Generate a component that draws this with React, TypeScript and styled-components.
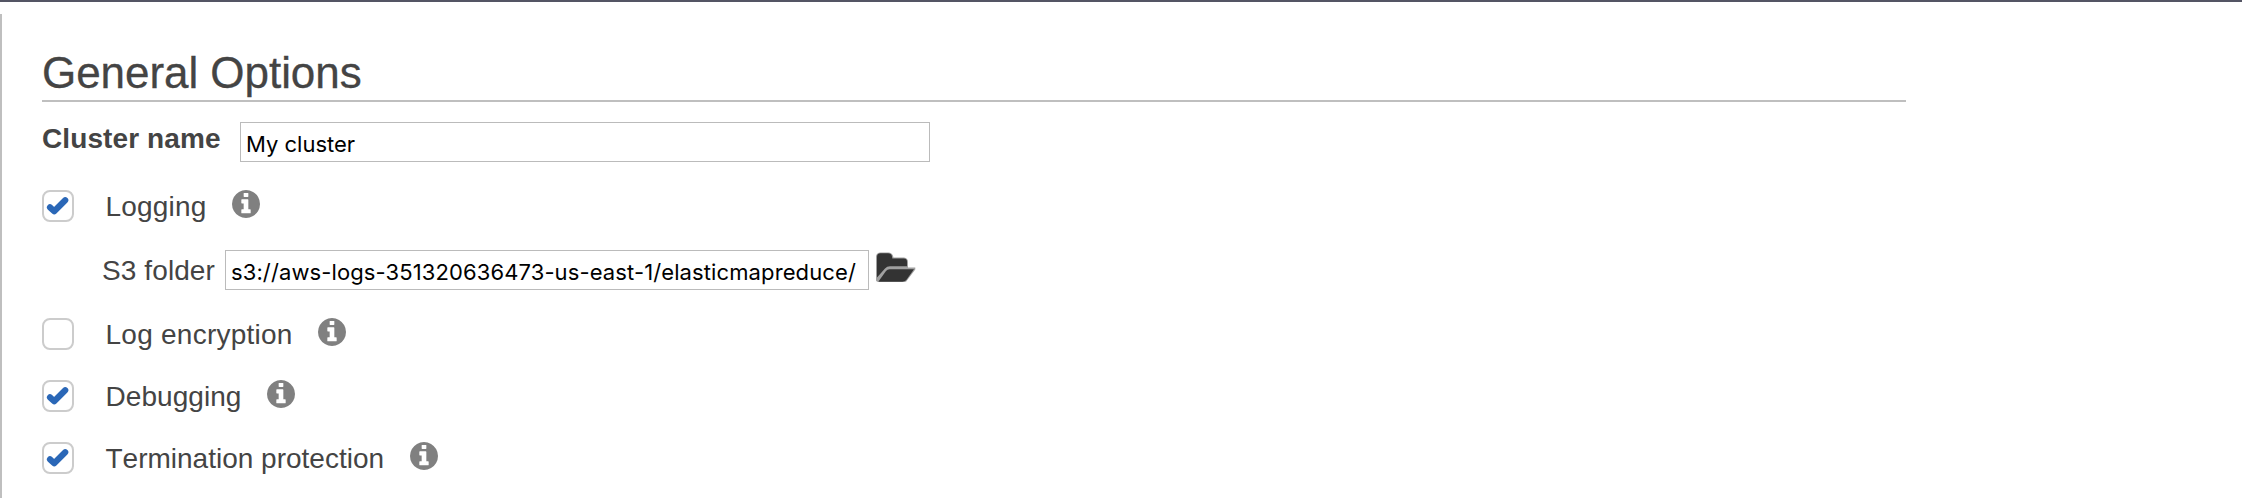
import React from "react";
import styled, { createGlobalStyle } from "styled-components";

const GlobalStyle = createGlobalStyle`
  *, *::before, *::after { box-sizing: border-box; }
  body { margin: 0; background: #fff; }
`;

const Page = styled.div`
  height: 498px;
  overflow: hidden;
  border-top: 2px solid #545564;
  padding-top: 12px;
  background: #fff;
  font-family: "Liberation Sans", Arial, sans-serif;
  font-size: 28px;
  line-height: 32px;
  font-kerning: none;
  color: #444;
`;

const Panel = styled.main`
  height: 484px;
  border-left: 2px solid #bfbfbf;
  padding: 34px 0 0 40px;
`;

const Title = styled.h1`
  margin: 0;
  width: 1864px;
  height: 54px;
  border-bottom: 2px solid #bfbfbf;
  font-size: 44px;
  font-weight: 400;
  line-height: 50px;
  letter-spacing: -0.05px;
  -webkit-text-stroke: 0.3px #444;
`;

const Field = styled.div<{ $top: number; $indent?: number }>`
  display: flex;
  align-items: flex-start;
  height: 40px;
  margin-top: ${(p) => p.$top}px;
  padding-left: ${(p) => p.$indent ?? 0}px;
`;

const FieldLabel = styled.label<{ $width: number; $bold?: boolean }>`
  width: ${(p) => p.$width}px;
  flex: none;
  white-space: nowrap;
  font-weight: ${(p) => (p.$bold ? 700 : 400)};
  padding-top: ${(p) => (p.$bold ? 1 : 5)}px;
  letter-spacing: 0.1px;
`;

const TextInput = styled.input<{ $width: number; $spacing: number }>`
  width: ${(p) => p.$width}px;
  height: 40px;
  flex: none;
  margin: 0;
  padding: 3px 5px 0;
  border: 1px solid #bbb;
  border-radius: 0;
  outline: none;
  background: #fff;
  color: #000;
  font-family: Inter, sans-serif;
  font-size: 22px;
  letter-spacing: ${(p) => p.$spacing}px;
`;

const FolderButton = styled.button`
  display: flex;
  margin: 2px 0 0 7px;
  padding: 0;
  border: 0;
  background: none;
`;

const OptionRow = styled.div<{ $top: number }>`
  display: flex;
  align-items: flex-start;
  height: 32px;
  margin-top: ${(p) => p.$top}px;
`;

const CheckBox = styled.span`
  display: flex;
  align-items: center;
  justify-content: center;
  width: 32px;
  height: 32px;
  flex: none;
  border: 2px solid #ccc;
  border-radius: 8px;
  background: #fff;
`;

const OptionLabel = styled.span<{ $spacing: number }>`
  margin: 1px 25.5px 0 31.5px;
  white-space: nowrap;
  letter-spacing: ${(p) => p.$spacing}px;
`;

const CheckIcon = () => (
  <svg width="28" height="28" viewBox="0 0 28 28" fill="none">
    <path d="M6 15.400L10.200 19.200L21.200 8.300" stroke="#2a67b7" strokeWidth="6.200" strokeLinecap="round" strokeLinejoin="round" />
  </svg>
);

const InfoIcon = () => (
  <svg width="28" height="28" viewBox="0 128 1536 1536" fill="#808080">
    <path d="M1024 1376v-160q0-14-9-23t-23-9h-96v-512q0-14-9-23t-23-9h-320q-14 0-23 9t-9 23v160q0 14 9 23t23 9h96v320h-96q-14 0-23 9t-9 23v160q0 14 9 23t23 9h448q14 0 23-9t9-23zm-128-896v-160q0-14-9-23t-23-9h-192q-14 0-23 9t-9 23v160q0 14 9 23t23 9h192q14 0 23-9t9-23zm640 416q0 209-103 385.5t-279.5 279.5-385.5 103-385.5-103-279.5-279.5-103-385.5 103-385.5 279.5-279.5 385.5-103 385.5 103 279.5 279.5 103 385.5z" />
  </svg>
);

const FolderIcon = () => (
  <svg width="40" height="30" viewBox="0 0 40 30">
    <path d="M0 28.500V4.500Q.5 .5 4.500 .5H12.500Q16.500 .5 17.500 5.500H28Q32 6 32 10V15.500H39.300V17.500L30 29.700H1Z" fill="#a0a0a0" />
    <path d="M1 25.500V5Q1 1.200 4.500 1.200H12Q15.500 1.200 16 4.500L16.300 6.500H27.800Q31 6.500 31 9.500V14.300H14Q11 14.300 9 16.500Z" fill="#333" />
    <path d="M13.500 17.200H38L30.500 27.700Q29 29.700 26.500 29.700H2.300L10 19Q11.400 17.200 13.500 17.200Z" fill="#333" />
  </svg>
);

interface OptionProps {
  label: string;
  checked?: boolean;
  top: number;
  spacing?: number;
}

const Option = ({ label, checked, top, spacing = 0 }: OptionProps) => (
  <OptionRow $top={top}>
    <CheckBox role="checkbox" aria-checked={!!checked} aria-label={label}>
      {checked && <CheckIcon />}
    </CheckBox>
    <OptionLabel $spacing={spacing}>{label}</OptionLabel>
    <InfoIcon />
  </OptionRow>
);

export default function App() {
  return (
    <>
      <GlobalStyle />
      <Page>
        <Panel>
          <Title>General Options</Title>
          <Field $top={20}>
            <FieldLabel $width={198} $bold htmlFor="cluster">Cluster name</FieldLabel>
            <TextInput id="cluster" $width={690} $spacing={0} defaultValue="My cluster" />
          </Field>
          <Option label="Logging" checked top={28} spacing={0.2} />
          <Field $top={28} $indent={60}>
            <FieldLabel $width={123} htmlFor="folder">S3 folder</FieldLabel>
            <TextInput id="folder" $width={644} $spacing={0.11} defaultValue="s3://aws-logs-351320636473-us-east-1/elasticmapreduce/" />
            <FolderButton aria-label="Browse">
              <FolderIcon />
            </FolderButton>
          </Field>
          <Option label="Log encryption" top={28} spacing={0.25} />
          <Option label="Debugging" checked top={30} spacing={0.05} />
          <Option label="Termination protection" checked top={30} />
        </Panel>
      </Page>
    </>
  );
}
